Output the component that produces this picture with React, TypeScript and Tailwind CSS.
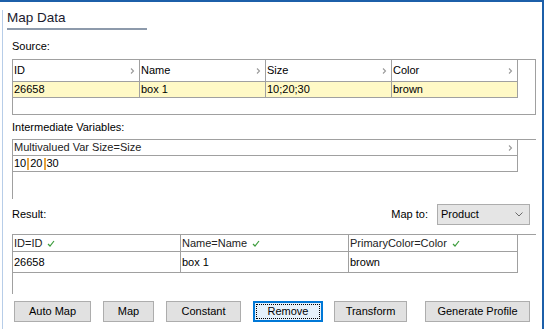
import React from 'react';

const Chevron = () => (
  <svg width="5" height="8" viewBox="0 0 5 8" className="shrink-0">
    <path d="M1 1.5 L3.5 4 L1 6.5" fill="none" stroke="#9a9a9a" strokeWidth="1.1" />
  </svg>
);

const Check = () => (
  <svg width="8" height="7" viewBox="0 0 8 7" className="ml-[5px] shrink-0">
    <path d="M1 4 L3 6 L7 1" fill="none" stroke="#3c9c3c" strokeWidth="1.2" />
  </svg>
);

const Sep = () => <span className="inline-block w-[2px] h-[12px] mx-[1px] bg-[#e8a33d]" />;

const sourceCols = [
  { name: 'ID', value: '26658', w: 'w-[127px]' },
  { name: 'Name', value: 'box 1', w: 'w-[126px]' },
  { name: 'Size', value: '10;20;30', w: 'w-[126px]' },
  { name: 'Color', value: 'brown', w: 'w-[126px]' },
];

const resultCols = [
  { name: 'ID=ID', value: '26658', w: 'w-[168px]' },
  { name: 'Name=Name', value: 'box 1', w: 'w-[168px]' },
  { name: 'PrimaryColor=Color', value: 'brown', w: 'w-[169px]' },
];

const buttons = [
  { label: 'Auto Map', cls: 'ml-[7px] w-[77px]' },
  { label: 'Map', cls: 'ml-[12px] w-[51px]' },
  { label: 'Constant', cls: 'ml-[12px] w-[75px]' },
  { label: 'Remove', cls: 'ml-[12px] w-[70px]', focused: true },
  { label: 'Transform', cls: 'ml-[11px] w-[73px]' },
  { label: 'Generate Profile', cls: 'ml-[18px] w-[105px]' },
];

export default function App() {
  return (
    <div className="w-[544px] h-[329px] bg-white border-t-2 border-r-2 border-[#1c5fa9] overflow-hidden font-['Liberation_Sans',Arial,sans-serif] text-[11px] text-black">
      <div className="ml-[2px] mt-[8px] h-[319px] border-l border-[#b7cde8] pl-[4px]">
        {/* Title */}
        <div className="w-[140px] h-[20px] border-b-2 border-[#8d9aab] text-[13.5px] leading-[16px] text-[#1a1a2e]">
          Map Data
        </div>

        {/* Source */}
        <div className="mt-[10px] pl-[5px] leading-[13px]">Source:</div>
        <div className="mt-[6px] ml-[5px] w-[524px] h-[56px] border border-[#a0a0a0]">
          <div className="flex h-[22px]">
            {sourceCols.map((c) => (
              <div
                key={c.name}
                className={`${c.w} border-r border-b border-[#a0a0a0] flex items-center justify-between pl-[1px] pr-[4px] leading-[13px]`}
              >
                <span>{c.name}</span>
                <Chevron />
              </div>
            ))}
          </div>
          <div className="flex h-[16px]">
            {sourceCols.map((c) => (
              <div
                key={c.name}
                className={`${c.w} border-r border-b border-[#a0a0a0] bg-[#fff9c6] flex items-center pl-[1px] leading-[13px]`}
              >
                {c.value}
              </div>
            ))}
          </div>
        </div>

        {/* Intermediate */}
        <div className="mt-[6px] pl-[5px] leading-[13px]">Intermediate Variables:</div>
        <div className="mt-[5px] ml-[5px] w-[524px] h-[60px] border-t border-l border-[#a0a0a0]">
          <div className="w-[505px] h-[16px] border-r border-b border-[#a0a0a0] flex items-center justify-between pl-[1px] pr-[4px] leading-[13px] text-[#222]">
            <span>Multivalued Var Size=Size</span>
            <Chevron />
          </div>
          <div className="w-[505px] h-[16px] border-r border-b border-[#a0a0a0] flex items-center pl-[1px] leading-[13px]">
            <span>10</span>
            <Sep />
            <span>20</span>
            <Sep />
            <span>30</span>
          </div>
        </div>

        {/* Result header */}
        <div className="mt-[5px] h-[21px] flex items-center leading-[13px]">
          <span className="pl-[5px]">Result:</span>
          <span className="ml-auto">Map to:</span>
          <div className="ml-[9px] mr-[12px] w-[93px] h-[21px] border border-[#adadad] bg-[#e5e5e5] flex items-center justify-between pl-[3px] pr-[6px]">
            <span>Product</span>
            <svg width="8" height="5" viewBox="0 0 8 5">
              <path d="M0.5 0.5 L4 4 L7.5 0.5" fill="none" stroke="#6a6a6a" strokeWidth="1" />
            </svg>
          </div>
        </div>

        {/* Result grid */}
        <div className="mt-[9px] ml-[5px] w-[524px] h-[60px] border-t border-l border-[#a0a0a0]">
          <div className="flex h-[17px]">
            {resultCols.map((c) => (
              <div
                key={c.name}
                className={`${c.w} border-r border-b border-[#a0a0a0] flex items-center pl-[1px] leading-[13px] text-[#222]`}
              >
                <span>{c.name}</span>
                <Check />
              </div>
            ))}
          </div>
          <div className="flex h-[21px]">
            {resultCols.map((c) => (
              <div
                key={c.name}
                className={`${c.w} border-r border-b border-[#a0a0a0] flex items-center pl-[1px] leading-[13px]`}
              >
                {c.value}
              </div>
            ))}
          </div>
        </div>

        {/* Buttons */}
        <div className="mt-[7px] flex h-[21px]">
          {buttons.map((b) =>
            b.focused ? (
              <div
                key={b.label}
                className={`${b.cls} h-[21px] border-2 border-[#0078d7] bg-[#e5f1fb] p-[1px]`}
              >
                <div className="h-full border border-dotted border-black flex items-center justify-center leading-[13px]">
                  {b.label}
                </div>
              </div>
            ) : (
              <div
                key={b.label}
                className={`${b.cls} h-[21px] border border-[#adadad] bg-[#e1e1e1] flex items-center justify-center leading-[13px]`}
              >
                {b.label}
              </div>
            )
          )}
        </div>
      </div>
    </div>
  );
}
